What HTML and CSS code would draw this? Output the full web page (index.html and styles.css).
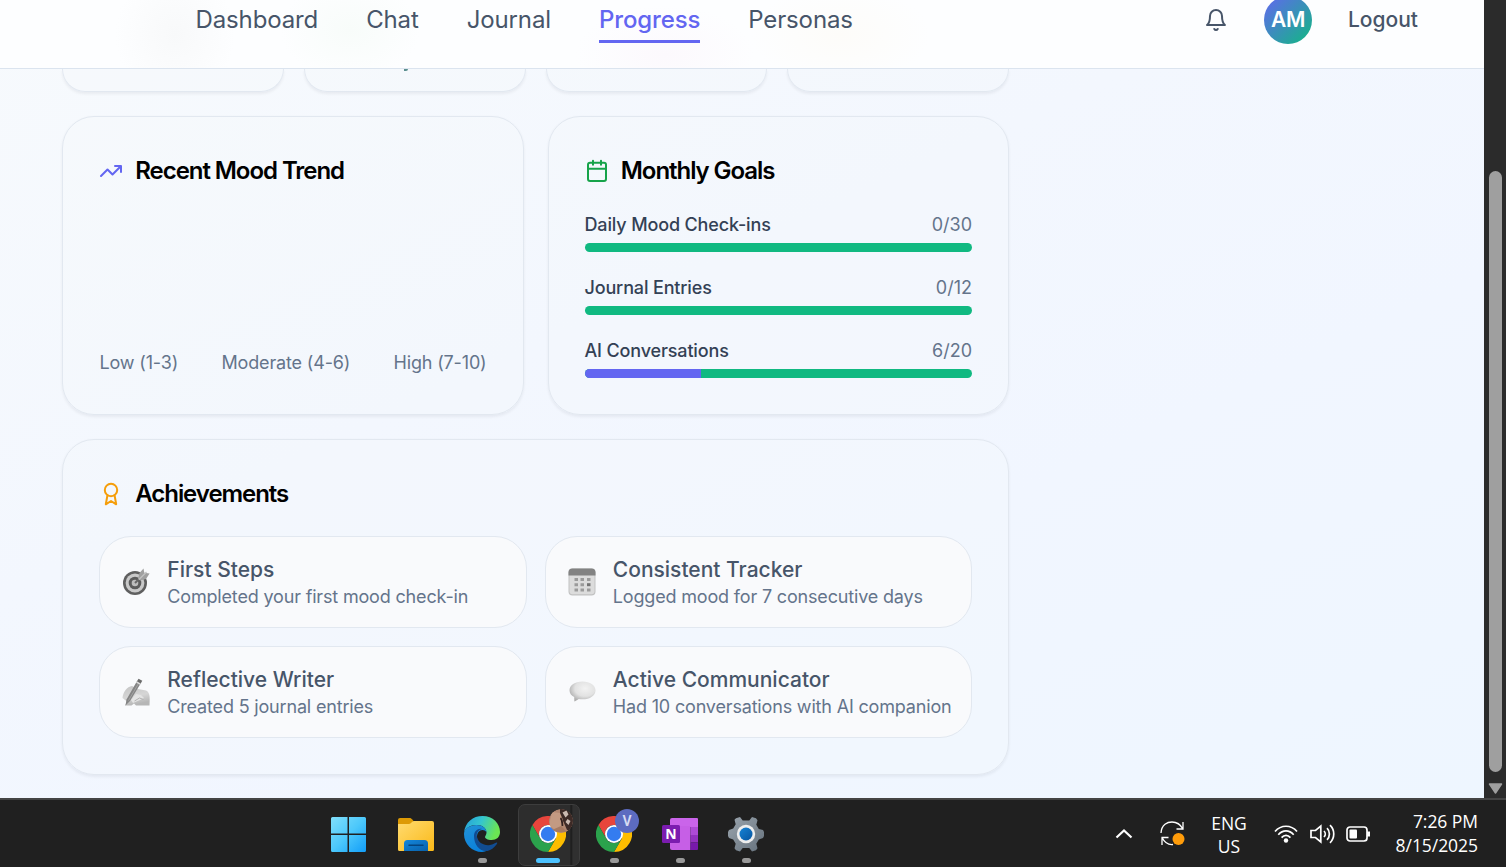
FILE: index.html
```html
<!DOCTYPE html>
<html lang="en">
<head>
<meta charset="utf-8">
<title>Progress</title>
<link rel="stylesheet" href="styles.css">
</head>
<body>
<div class="screen">
  <div class="window">
    <div class="page">
      <header class="topbar">
        <nav class="nav">
          <a class="nav-link">Dashboard</a>
          <a class="nav-link">Chat</a>
          <a class="nav-link">Journal</a>
          <a class="nav-link nav-link-active">Progress</a>
          <a class="nav-link">Personas</a>
        </nav>
        <div class="account">
          <svg class="bell" viewBox="0 0 24 24"><path d="M10.3 21a1.94 1.94 0 0 0 3.4 0M6 8a6 6 0 0 1 12 0c0 7 3 9 3 9H3s3-2 3-9"/></svg>
          <span class="avatar">AM</span>
          <a class="logout">Logout</a>
        </div>
      </header>
      <main class="content">
        <section class="stats">
          <div class="stat"></div>
          <div class="stat stat-marked"><span class="stat-tick"></span></div>
          <div class="stat"></div>
          <div class="stat"></div>
        </section>
        <section class="panels">
          <article class="card mood">
            <h2 class="card-title"><svg class="icon icon-indigo" viewBox="0 0 24 24"><path d="M22 7l-8.5 8.5-5-5L2 17M16 7h6v6"/></svg>Recent Mood Trend</h2>
            <div class="legend"><span>Low (1-3)</span><span>Moderate (4-6)</span><span>High (7-10)</span></div>
          </article>
          <article class="card">
            <h2 class="card-title"><svg class="icon icon-green" viewBox="0 0 24 24"><path d="M8 1.700v4M16 1.700v4M3 9.700h18"/><rect x="3" y="3.700" width="18" height="18.300" rx="2"/></svg>Monthly Goals</h2>
            <div class="goals">
              <div class="goal"><div class="goal-row"><span class="goal-name">Daily Mood Check-ins</span><span>0/30</span></div><div class="bar"><div class="fill" style="width:0%"></div></div></div>
              <div class="goal"><div class="goal-row"><span class="goal-name">Journal Entries</span><span>0/12</span></div><div class="bar"><div class="fill" style="width:0%"></div></div></div>
              <div class="goal"><div class="goal-row"><span class="goal-name">AI Conversations</span><span>6/20</span></div><div class="bar"><div class="fill" style="width:30%"></div></div></div>
            </div>
          </article>
        </section>
        <section class="card">
          <h2 class="card-title"><svg class="icon icon-amber" viewBox="0 0 24 24"><circle cx="12" cy="8" r="6.200"/><path d="M15.500 13L17.200 22.300 12 19l-5.200 3.300L8.500 13"/></svg>Achievements</h2>
          <div class="awards">
            <div class="award">
              <svg class="emoji" viewBox="0 0 28 28"><circle cx="13" cy="15" r="12" fill="#5f5f5f"/><circle cx="13" cy="15" r="9.4" fill="#c9c9c9"/><circle cx="13" cy="15" r="6.3" fill="#5c5c5c"/><circle cx="13" cy="15" r="3.3" fill="#bdbdbd"/><path d="M13 15L20 8" stroke="#666" stroke-width="2"/><path d="M16 11l1.500-6L21.500.5l.8 4.200L27.600 5.500 24 11l-6 1.500z" fill="#a0a0a0"/><path d="M17 11.500L24.500 4" stroke="#c2c2c2" stroke-width="1.200"/></svg>
              <div class="award-copy"><h3 class="award-name">First Steps</h3><p class="award-text">Completed your first mood check-in</p></div>
            </div>
            <div class="award">
              <svg class="emoji" viewBox="0 0 28 28"><rect x=".5" y=".5" width="27" height="27" rx="4" fill="#c2c2c2"/><rect x="1.500" y="3" width="25" height="23.300" rx="3" fill="#dcdcdc"/><path d="M.5 7.500V4.500a4 4 0 0 1 4-4h19a4 4 0 0 1 4 4v3z" fill="#828282"/><path d="M6.500 11.500h3.500M12.500 11.500h3.500M19 11.500h3.500M6.500 16.700h3.500M12.500 16.700h3.500M6.500 22h3.500M12.500 22h3.500M19 22h3.500" stroke="#9b9b9b" stroke-width="3"/><path d="M19 16.700h3.500" stroke="#747474" stroke-width="3"/></svg>
              <div class="award-copy"><h3 class="award-name">Consistent Tracker</h3><p class="award-text">Logged mood for 7 consecutive days</p></div>
            </div>
            <div class="award">
              <svg class="emoji" viewBox="0 0 28 28"><defs><linearGradient id="hand" x2=".3" y2="1"><stop stop-color="#c4c4c4"/><stop offset=".6" stop-color="#d6d6d6"/><stop offset="1" stop-color="#b6b6b6"/></linearGradient></defs><path d="M.5 20C1 14 5 8.500 10 8l6 3 8 1.500c4 2 4 6 3.500 15H14l-2-2-2.500 2H3l2-4z" fill="url(#hand)"/><path d="M9 22l5-6 5 1 3 3-4 2-7 3z" fill="#e4e4e4"/><path d="M12.500 23l5-3 4 1.500" fill="none" stroke="#b2b2b2"/><path d="M3.500 27.500l1-6L14.500 4l3.700 2.200L8 23z" fill="#858585"/><path d="M6.500 22.500L16.500 5.500" stroke="#a3a3a3"/><path d="M14.500 4l2-3.300 3.800 2-2 3.500z" fill="#6c6c6c"/><path d="M14.500 4l3.800 2.200" stroke="#ddd" stroke-width="1.500"/></svg>
              <div class="award-copy"><h3 class="award-name">Reflective Writer</h3><p class="award-text">Created 5 journal entries</p></div>
            </div>
            <div class="award">
              <svg class="emoji" viewBox="0 0 28 28"><defs><radialGradient id="bubble" cx=".6" cy=".35" r=".65"><stop stop-color="#f2f2f2"/><stop offset=".6" stop-color="#e2e2e2"/><stop offset="1" stop-color="#b0b0b0"/></radialGradient></defs><path d="M14.500 3.500C7 3.500 1.500 7.300 1.500 12.200c0 3 1.700 5.300 4.700 6.800L6.300 23.500c2-.7 3-1.500 4.400-2.500C20 22.500 27.500 18.500 27.500 12.200 27.500 7.300 22 3.500 14.500 3.500z" fill="url(#bubble)"/></svg>
              <div class="award-copy"><h3 class="award-name">Active Communicator</h3><p class="award-text">Had 10 conversations with AI companion</p></div>
            </div>
          </div>
        </section>
      </main>
    </div>
    <div class="scrollbar">
      <div class="thumb"></div>
      <svg class="scroll-arrow" viewBox="0 0 15 11"><path d="M1.500 1h12L7.500 10z" fill="#9f9f9f" stroke="#9f9f9f" stroke-width="1.500" stroke-linejoin="round"/></svg>
    </div>
  </div>
  <footer class="taskbar">
    <div class="apps">
      <div class="app">
        <svg class="app-icon" viewBox="0 0 36 36"><defs><linearGradient id="win" gradientUnits="userSpaceOnUse" x1="0" y1="0" x2="36" y2="36"><stop stop-color="#83e0fb"/><stop offset=".5" stop-color="#4cc8fb"/><stop offset="1" stop-color="#109cf8"/></linearGradient></defs><path d="M1.500 1h15v16.500H0V2.500A1.500 1.500 0 0 1 1.500 1zM18 1h15.500A1.500 1.500 0 0 1 35 2.500v15H18zM0 19h16.500v17h-15A1.500 1.500 0 0 1 0 34.500zM18 19h17v15.500a1.500 1.500 0 0 1-1.500 1.500H18z" fill="url(#win)"/></svg>
      </div>
      <div class="app">
        <svg class="app-icon" viewBox="0 0 36 36"><defs><linearGradient id="folder" x2="1" y2="1"><stop stop-color="#ffdb70"/><stop offset="1" stop-color="#fbb918"/></linearGradient><linearGradient id="tray" x2="1" y2="1"><stop stop-color="#1487dc"/><stop offset="1" stop-color="#0861ab"/></linearGradient></defs><path d="M0 4A2 2 0 0 1 2 2h9.500c1 0 1.700.5 2.500 1.200L16 5.500v7H0z" fill="#dd9a05"/><path d="M0 8h11c2 0 3-3 5-3h18a2 2 0 0 1 2 2v26.500a1.500 1.500 0 0 1-1.500 1.500h-33A1.500 1.500 0 0 1 0 33.500z" fill="url(#folder)"/><path d="M6 35V27.500a3.500 3.500 0 0 1 3.500-3.500h17A3.500 3.500 0 0 1 30 27.500v7.500z" fill="url(#tray)"/><path d="M11 29.200h14" stroke="#05447e" stroke-width="1.500" stroke-linecap="round"/></svg>
      </div>
      <div class="app">
        <svg class="app-icon" viewBox="0 0 36 36"><defs><linearGradient id="edgeTop" x2="1" y2=".3"><stop stop-color="#249ddc"/><stop offset=".5" stop-color="#34c5cf"/><stop offset="1" stop-color="#6be553"/></linearGradient><linearGradient id="edgeLow" x2=".6" y2="1"><stop stop-color="#2392d6"/><stop offset="1" stop-color="#087fdb"/></linearGradient></defs><path d="M0 17C1 6 9 0 18.500 0 29 0 36 7.500 36 16c0 5-3.500 8-8.500 8-4 0-6.500-1.500-6.500-3 0-1 1.500-2 1.500-4.500 0-4-4-7.500-9.500-7.500C6 9 1 12.500 0 17z" fill="url(#edgeTop)"/><path d="M0 18C0 12.500 6 9 12.500 9c6 0 10 3.500 10 7.500-1-1.800-2.500-2.500-4-2.500-3.500 0-5.500 3-5.500 7 0 7 6 13 13 11.500C23 35 20 36 18 36 8 36 0 28 0 18z" fill="url(#edgeLow)"/><path d="M10 20c0-5 4-8 8-7-4 1-6 4-5 8 1 5.500 7 9 13 8 3-.5 5-2 6.500-2.500 1.200-.3.8 1 0 2C30 32 27 34 23.500 35 16 36 10 29 10 20z" fill="#114c91"/></svg>
        <span class="mark"></span>
      </div>
      <div class="app app-current">
        <svg class="app-icon" viewBox="0 0 36 36"><path d="M18 9h15.600A18 18 0 0 1 18 36l7.800-13.500z" fill="#fdbd00"/><path d="M2.400 9A18 18 0 0 1 33.600 9H18a9 9 0 0 0-7.800 13.500z" fill="#e8453c"/><path d="M2.400 9l7.800 13.500A9 9 0 0 0 25.800 22.500L18 36A18 18 0 0 1 2.400 9z" fill="#2ba24c"/><circle cx="18" cy="18" r="9" fill="#fff"/><circle cx="18" cy="18" r="7.200" fill="#347cf0"/></svg>
        <svg class="app-badge" viewBox="0 0 24 24"><defs><clipPath id="face"><circle cx="12" cy="12" r="12"/></clipPath></defs><g clip-path="url(#face)"><path d="M0 0h24v24H0z" fill="#b18771"/><path d="M11 0h13v22l-6-1-3-7-4-8z" fill="#3d2a26"/><path d="M3 3l8 1 3 7-1 7-7 3-6-5z" fill="#c39a82"/><path d="M13.500 3.500l4-2 2 4-3 3zM18.500 10l3 2-2 4-3-3z" fill="#cbbab1"/><path d="M3 21l9-4 6 6H4z" fill="#a67a62"/><path d="M11.500 9c2 2 1.500 5 2 8" stroke="#33211f" stroke-width="1.800" fill="none"/></g></svg>
        <span class="mark mark-wide"></span>
      </div>
      <div class="app">
        <svg class="app-icon" viewBox="0 0 36 36"><path d="M18 9h15.600A18 18 0 0 1 18 36l7.800-13.500z" fill="#fdbd00"/><path d="M2.400 9A18 18 0 0 1 33.600 9H18a9 9 0 0 0-7.800 13.500z" fill="#e8453c"/><path d="M2.400 9l7.800 13.500A9 9 0 0 0 25.800 22.500L18 36A18 18 0 0 1 2.400 9z" fill="#2ba24c"/><circle cx="18" cy="18" r="9" fill="#fff"/><circle cx="18" cy="18" r="7.200" fill="#347cf0"/></svg>
        <span class="app-badge profile-letter">V</span>
        <span class="mark"></span>
      </div>
      <div class="app">
        <svg class="app-icon" viewBox="0 0 36 36"><path d="M10 2h25a1 1 0 0 1 1 1v8H8V4a2 2 0 0 1 2-2z" fill="#ca64ea"/><path d="M8 10h20.500v24H10a2 2 0 0 1-2-2z" fill="#c65fe6"/><path d="M28.500 11H36v8h-7.500z" fill="#ae4bd5"/><path d="M28.500 19H36v7.500h-7.500z" fill="#9332bf"/><path d="M28.500 26.500H36V33a1 1 0 0 1-1 1h-6.500z" fill="#7719aa"/><rect y="9" width="18" height="18" rx="1.500" fill="#7b1caf"/><text class="note-letter" x="9" y="23" text-anchor="middle">N</text></svg>
        <span class="mark"></span>
      </div>
      <div class="app">
        <svg class="app-icon" viewBox="0 0 36 36"><defs><linearGradient id="gear" x2="1" y2="1"><stop stop-color="#9aa4ad"/><stop offset="1" stop-color="#65717c"/></linearGradient><linearGradient id="hub" x2="1" y2="1"><stop stop-color="#1683d5"/><stop offset="1" stop-color="#0755a0"/></linearGradient></defs><path d="M8 2.200l4-1.300 2.700 3.500h6.600L24 .9l4 1.300 1.500 2-1.200 4.500 2.500 4.200L35 14l1 2v4l-1 2-4.200 1.500-2.500 4.200 1.200 4.500-1.500 2-4 1.300-2.700-3.500h-6.600L12 35.500l-4-1.300-1.500-2 1.200-4.500-2.500-4.200L1 22l-1-2v-4l1-2 4.200-1.500 2.500-4.200L6.500 3.800z" fill="url(#gear)"/><circle cx="18" cy="18" r="9.200" fill="#eee"/><circle cx="18" cy="18" r="6.500" fill="url(#hub)"/></svg>
        <span class="mark"></span>
      </div>
    </div>
    <div class="tray">
      <svg class="tray-up" viewBox="0 0 18 12"><path d="M1.500 9.500L9 2.500l7.500 7"/></svg>
      <svg class="tray-sync" viewBox="0 0 25 25"><path d="M1 12C1.500 3.500 7.500 1 12 1c5 0 8.500 2.500 11 7M16.500 8h6.500V1M8.500 16.500H2V24M2 16.500c2.500 5 6.500 7.500 11 7"/><circle cx="18.500" cy="18" r="6" fill="#ff9c0a" stroke="none"/></svg>
      <div class="lang"><span>ENG</span><span>US</span></div>
      <svg class="tray-wifi" viewBox="0 0 24 18"><path d="M1 6.500C7-.500 17-.500 23 6.500M4.300 9.800c4.500-5.200 10.900-5.200 15.400 0M7.600 12.600c2.500-3 6.300-3 8.800 0"/><circle cx="12" cy="15.500" r="2.200" fill="#fff" stroke="none"/></svg>
      <svg class="tray-volume" viewBox="0 0 25 20"><path d="M1 6.500h4.500L10.800 2v16L5.500 13.500H1zM14 7c1.700 1.700 1.700 4.300 0 6M17 4.200c3.200 3 3.200 8.600 0 11.600M20 1.200c5 4.800 5 12.800 0 17.600"/></svg>
      <svg class="tray-battery" viewBox="0 0 25 16"><rect x="1" y="1" width="20" height="14" rx="3"/><rect x="3.500" y="3.500" width="7.500" height="9" rx="1" fill="#fff" stroke="none"/><path d="M22.500 5.500v5" stroke-width="3"/></svg>
      <div class="clock"><span>7:26 PM</span><span>8/15/2025</span></div>
    </div>
  </footer>
</div>
</body>
</html>
```
FILE: styles.css
```css
* { box-sizing: border-box; }
body { margin: 0; font-family: Inter, "Liberation Sans", sans-serif; }
h2, h3, p { margin: 0; }
.screen { width: 1506px; height: 867px; display: flex; flex-direction: column; overflow: hidden; background: #202020; }
.window { height: 798px; display: flex; }
.page { width: 1484px; height: 798px; overflow: hidden; background: linear-gradient(155deg, #f7fafd 0%, #f3f7fe 40%, #f1f6ff 65%, #eef6ff 100%); }

.topbar { height: 69px; display: flex; justify-content: space-between; padding: 0 66px 0 195.5px; border-bottom: 1px solid #dbe4ef;
  background: radial-gradient(ellipse 60px 65px at 175px 35px, #f8f9fa, transparent), radial-gradient(ellipse 70px 50px at 350px 30px, #f8fcfa, transparent), radial-gradient(ellipse 90px 50px at 665px 55px, #fcf9fd, transparent), radial-gradient(ellipse 90px 50px at 840px 35px, #fdfcf9, transparent), #fdfeff; }
.nav { display: flex; gap: 48px; height: 43px; }
.nav-link { font-size: 24px; line-height: 36px; letter-spacing: -.13px; margin-top: 2px; height: 41px; color: #475569; white-space: nowrap; }
.nav-link-active { color: #6366f1; font-weight: 500; border-bottom: 3px solid #6366f1; }
.account { display: flex; align-items: center; height: 40px; }
.bell { width: 24px; height: 24px; margin-right: 36px; fill: none; stroke: #475569; stroke-width: 2; stroke-linecap: round; stroke-linejoin: round; }
.avatar { width: 48px; height: 48px; flex: none; border-radius: 50%; display: flex; align-items: center; justify-content: center; background: linear-gradient(135deg, #6366f1, #10b981); color: #fff; font-size: 21px; line-height: 26px; padding-bottom: 1px; letter-spacing: -.3px; font-weight: 600; margin-right: 36px; }
.logout { font-size: 21px; line-height: 26px; font-weight: 500; color: #475569; }

.content { width: 947px; margin-left: 62px; display: flex; flex-direction: column; gap: 24px; }
.stats { display: grid; grid-template-columns: repeat(4, 1fr); gap: 20px; height: 23px; }
.stat { height: 23px; border: 1px solid #e2e8f0; border-top: 0; border-radius: 0 0 30px 30px / 0 0 30px 30px; background: rgba(244,248,253,.3); box-shadow: 0 2px 3px rgba(15,23,42,.06); }
.stat-marked { padding-left: 99px; }
.stat-tick { display: block; width: 4px; height: 2px; border-radius: 0 0 2px 0; background: #5b8f8f; }
.panels { display: grid; grid-template-columns: 1fr 1fr; gap: 24px; }
.card { border: 1px solid #e2e8f0; border-radius: 32px; padding: 36px; background: rgba(244,248,253,.3); box-shadow: 0 1.5px 3px rgba(15,23,42,.06); }
.card-title { display: flex; align-items: center; gap: 12.3px; font-size: 24px; line-height: 36px; font-weight: 600; letter-spacing: -1.06px; color: #000; }
.icon { width: 24px; height: 24px; fill: none; stroke-width: 2; stroke-linecap: round; stroke-linejoin: round; }
.icon-indigo { stroke: #6366f1; }
.icon-green { stroke: #16a34a; }
.icon-amber { stroke: #f59e0b; }
.mood { display: flex; flex-direction: column; justify-content: space-between; }
.legend { display: flex; justify-content: space-between; padding-left: .5px; font-size: 18px; line-height: 29.5px; letter-spacing: -.16px; color: #64748b; }
.goals { display: flex; flex-direction: column; gap: 22.5px; margin-top: 22px; }
.goal-row { display: flex; justify-content: space-between; font-size: 18px; line-height: 27px; color: #64748b; }
.goal-name { font-weight: 500; letter-spacing: -.15px; color: #334155; }
.bar { height: 9px; margin-top: 4.5px; border-radius: 5px; overflow: hidden; background: #10b981; }
.fill { height: 100%; background: #6366f1; }
.awards { display: grid; grid-template-columns: repeat(2, minmax(0, 1fr)); gap: 18px; margin-top: 24px; }
.award { height: 92px; display: flex; align-items: center; gap: 17.3px; padding: 0 18px 0 22px; border: 1px solid #e2e8f0; border-radius: 32px; background: #f9fafc; }
.award-copy { padding-top: 2px; }
.emoji { width: 28px; height: 28px; flex: none; }
.award-name { font-size: 21px; line-height: 27px; font-weight: 500; color: #475569; }
.award-text { font-size: 18px; line-height: 27px; letter-spacing: -.17px; color: #64748b; white-space: nowrap; }

.scrollbar { width: 22px; height: 798px; background: #2b2b2b; padding: 171px 0 0 5px; }
.thumb { width: 13px; height: 601px; border-radius: 7px; background: #9f9f9f; }
.scroll-arrow { display: block; width: 15px; height: 11px; margin: 11px 0 0 -1px; }

.taskbar { height: 69px; border-top: 2px solid #444; background: #202020; display: flex; justify-content: space-between; }
.apps { display: flex; padding-left: 316px; }
.app { width: 66px; height: 67px; padding-top: 16px; display: flex; flex-direction: column; align-items: center; position: relative; }
.app:nth-child(n+2) { left: 1px; }
.app-icon { width: 36px; height: 36px; flex: none; position: relative; }
.app-badge { position: absolute; left: 34px; top: 9px; width: 24px; height: 24px; border-radius: 50%; }
.profile-letter { display: flex; align-items: center; justify-content: center; background: #5c6bc0; color: #d5daf2; font: 600 14px Roboto, sans-serif; }
.mark { width: 9px; height: 5px; margin-top: 6px; border-radius: 3px; background: #999; position: relative; }
.mark-wide { width: 24px; background: #4cc2ff; }
.app-current::before { content: ""; position: absolute; left: 3px; top: 4px; width: 60px; height: 60px; border: 1px solid #3d3d3d; border-radius: 7px; background: linear-gradient(90deg, #2d2d2d 51px, #191919 52px, #303030 54px); }
.note-letter { font: bold 14px "Open Sans", sans-serif; fill: #fff; }
.tray { display: flex; align-items: center; padding-right: 28px; color: #fff; font-family: "Open Sans", "Noto Sans", sans-serif; font-size: 17.5px; }
.tray svg { fill: none; stroke: #fff; stroke-width: 1.7; flex: none; }
.tray .tray-up { width: 18px; height: 12px; margin-right: 27px; stroke-width: 2.2; }
.tray .tray-sync { width: 25px; height: 25px; margin-right: 24px; stroke-width: 1.3; }
.lang { width: 40px; display: flex; flex-direction: column; align-items: center; line-height: 23px; padding-top: 2px; margin-right: 25px; }
.tray-wifi { width: 24px; height: 18px; margin-right: 12px; }
.tray-volume { width: 25px; height: 20px; margin-right: 11px; }
.tray-battery { width: 25px; height: 16px; margin-right: 23px; }
.clock { width: 84px; display: flex; flex-direction: column; align-items: flex-end; line-height: 24px; padding-bottom: 2px; letter-spacing: -.05px; }
```
